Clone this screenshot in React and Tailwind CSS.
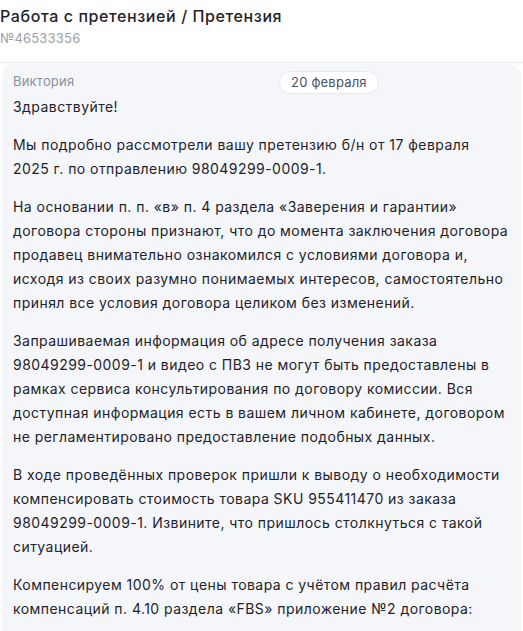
export default function App() {
  const paras = [
    "Мы подробно рассмотрели вашу претензию б/н от 17 февраля 2025 г. по отправлению 98049299-0009-1.",
    "На основании п. п. «в» п. 4 раздела «Заверения и гарантии» договора стороны признают, что до момента заключения договора продавец внимательно ознакомился с условиями договора и, исходя из своих разумно понимаемых интересов, самостоятельно принял все условия договора целиком без изменений.",
    "Запрашиваемая информация об адресе получения заказа 98049299-0009-1 и видео с ПВЗ не могут быть предоставлены в рамках сервиса консультирования по договору комиссии. Вся доступная информация есть в вашем личном кабинете, договором не регламентировано предоставление подобных данных.",
    "В ходе проведённых проверок пришли к выводу о необходимости компенсировать стоимость товара SKU 955411470 из заказа 98049299-0009-1. Извините, что пришлось столкнуться с такой ситуацией.",
    "Компенсируем 100% от цены товара с учётом правил расчёта компенсаций п. 4.10 раздела «FBS» приложение №2 договора:",
  ];
  return (
    <div className="w-[523px] h-[631px] overflow-hidden bg-white" style={{ fontFamily: "Inter, 'Noto Sans', sans-serif" }}>
      <div className="pt-[4px] pb-[14px] border-b border-[#e8ebf0]">
        <div className="text-[16px] leading-[24px] font-medium tracking-[0.6px] text-[#1f2329]">Работа с претензией / Претензия</div>
        <div className="text-[13px] leading-[20px] tracking-[0.2px] text-[#9aa0a8]">№46533356</div>
      </div>
      <div className="ml-[2px] mr-[2px] mt-[1px] bg-[#f4f6fa] rounded-[12px] px-[11px] pt-[4px] pb-[20px] h-[700px]">
        <div className="relative h-[27px]">
          <span className="text-[13px] leading-[24px] tracking-[0.2px] text-[#8c929c]">Виктория</span>
          <span className="absolute left-[266px] top-[3px] h-[23px] px-[11px] rounded-full bg-white border border-[#e6e9ee] text-[13px] leading-[21px] tracking-[0.2px] text-[#4a5260]">20 февраля</span>
        </div>
        <div className="text-[14px] leading-[24px] tracking-[0.45px] text-[#1f2329]">
          <p className="mb-[14px]">Здравствуйте!</p>
          {paras.map((p, i) => (
            <p key={i} className="mb-[14px]">{p}</p>
          ))}
        </div>
      </div>
    </div>
  );
}
